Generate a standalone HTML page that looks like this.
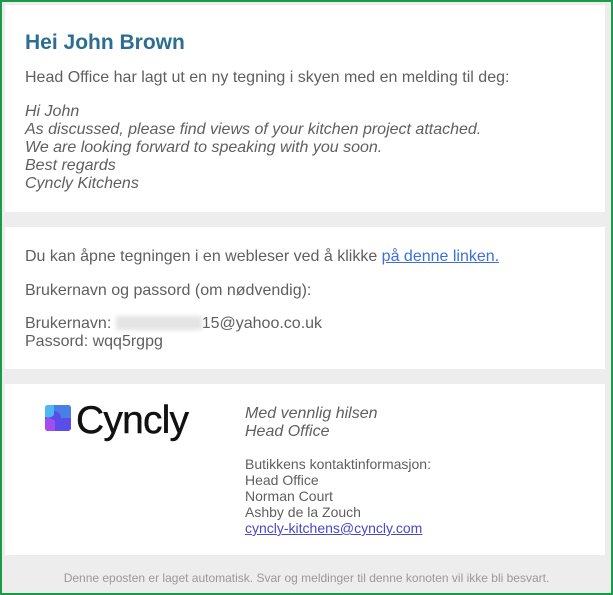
<!DOCTYPE html>
<html><head><meta charset="utf-8"><style>
*{margin:0;padding:0;box-sizing:border-box}
html,body{width:613px;height:595px}
body{background:#ededed;font-family:"Liberation Sans",Arial,sans-serif;color:#5f5f5f;position:relative;overflow:hidden}
.frame{position:absolute;left:0;top:0;width:613px;height:595px;border:2px solid #1a9a4a}
.card{position:absolute;left:5px;width:600px;background:#fff}
.t{position:absolute;white-space:nowrap;font-size:16px;line-height:18px}
a{color:#3b6fe0}
.s{font-size:14px;line-height:16px}
</style></head><body>
<div class="card" style="top:5px;height:207px"></div>
<div class="card" style="top:227px;height:142px"></div>
<div class="card" style="top:384px;height:171px"></div>

<div class="t" style="left:25px;top:31px;font-size:21px;line-height:24px;font-weight:bold;color:#2b6e92">Hei John Brown</div>
<div class="t" style="left:25px;top:69px">Head Office har lagt ut en ny tegning i skyen med en melding til deg:</div>
<div class="t" style="left:25px;top:103px;font-style:italic">Hi John<br>As discussed, please find views of your kitchen project attached.<br>We are looking forward to speaking with you soon.<br>Best regards<br>Cyncly Kitchens</div>

<div class="t" style="left:25px;top:248px">Du kan åpne tegningen i en webleser ved å klikke <a href="#">på denne linken.</a></div>
<div class="t" style="left:25px;top:282px">Brukernavn og passord (om nødvendig):</div>
<div class="t" style="left:25px;top:315px">Brukernavn: <span style="display:inline-block;width:86px;height:14px;background:#e4e4e4;vertical-align:-2px;filter:blur(2px)"></span>15@yahoo.co.uk<br>Passord: wqq5rgpg</div>

<svg style="position:absolute;left:45px;top:405px" width="26" height="26" viewBox="0 0 26 26">
<rect x="0" y="0" width="26" height="26" rx="3" fill="#5b4de8"/>
<path d="M0 3a3 3 0 0 1 3-3h6v10a8 8 0 0 1-9 2z" fill="#4fb7f3"/>
<path d="M9 0h14a3 3 0 0 1 3 3v10h-10a7 7 0 0 0-7-7z" fill="#4a7fe6"/>
<path d="M0 14a9 9 0 0 1 10 2v10h-7a3 3 0 0 1-3-3z" fill="#a34cf0"/>
</svg>
<div class="t" style="left:76px;top:399px;font-size:39px;line-height:44px;color:#111;letter-spacing:-0.8px;-webkit-text-stroke:0.4px #111">Cyncly</div>

<div class="t" style="left:245px;top:405px;font-style:italic">Med vennlig hilsen<br>Head Office</div>
<div class="t s" style="left:245px;top:456px">Butikkens kontaktinformasjon:<br>Head Office<br>Norman Court<br>Ashby de la Zouch<br><a href="#" style="color:#4a47c8">cyncly-kitchens@cyncly.com</a></div>

<div class="t" style="left:0;width:613px;text-align:center;top:569px;font-size:12px;color:#999">Denne eposten er laget automatisk. Svar og meldinger til denne konoten vil ikke bli besvart.</div>
<div class="frame"></div>
</body></html>
